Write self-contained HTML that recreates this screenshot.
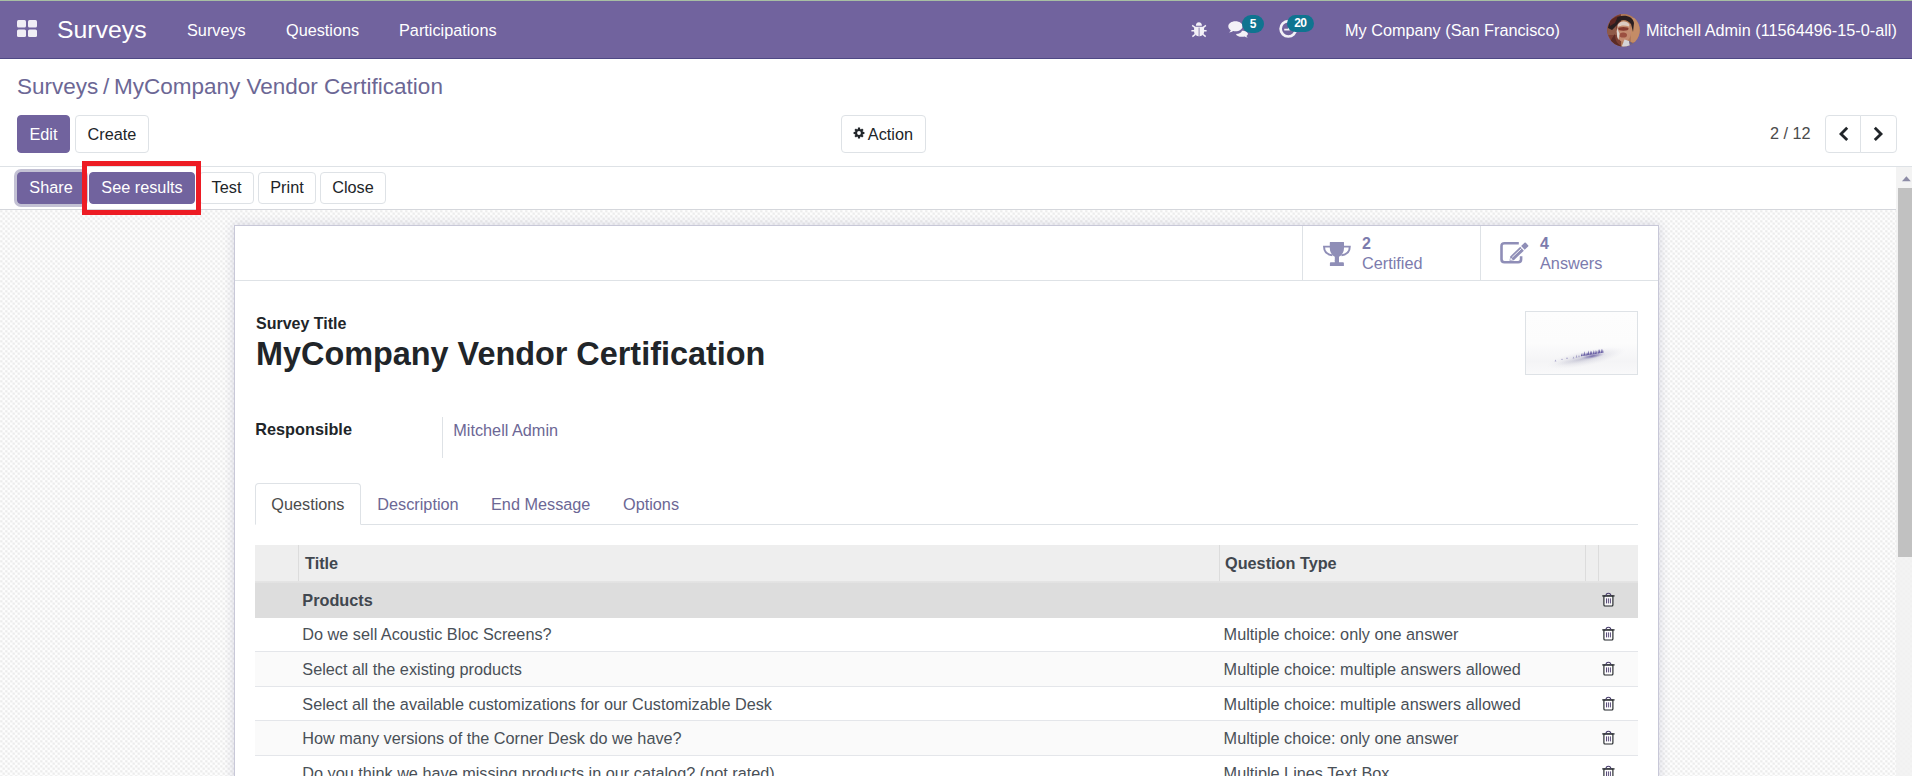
<!DOCTYPE html>
<html lang="en">
<head>
<meta charset="utf-8">
<title>Surveys - MyCompany Vendor Certification</title>
<style>
*{box-sizing:border-box;margin:0;padding:0}
html,body{width:1912px;height:776px;overflow:hidden;background:#fff}
body{font-family:"Liberation Sans",Arial,sans-serif;font-size:16.25px;color:#212529;position:relative}
.abs{position:absolute;white-space:nowrap}
/* top */
#topline{left:0;top:0;width:1912px;height:1px;background:#a7bfa3}
#nav{left:0;top:1px;width:1912px;height:58px;background:#71639e;border-bottom:1px solid #4e4885}
#nav .t{color:#fff;line-height:20px;font-size:16.25px}
#brand{left:57px;top:16px;font-size:24.8px!important;line-height:28px!important;color:#fff}
.badge{position:absolute;background:#0f7490;color:#fff;font-weight:bold;font-size:12px;line-height:18px;height:18px;border-radius:9px;text-align:center}
/* control panel */
#bc{left:17px;top:72px;font-size:22.5px;line-height:30px;color:#6c6795}
.btn{position:absolute;height:38px;line-height:36px;border:1px solid #dee2e6;border-radius:4px;background:#fff;color:#212529;text-align:center;font-size:16.25px;white-space:nowrap}
.btn.p{background:#71639e;border-color:#71639e;color:#fff}
.sb{height:32px;line-height:28px}
#cpline{left:0;top:166px;width:1912px;height:1px;background:#dee2e6}
#status{left:0;top:167px;width:1896px;height:43px;background:#fff;border-bottom:1px solid #d5d7dc}
#content{left:0;top:210px;width:1912px;height:566px;background:radial-gradient(circle at 1.25px 1.25px,#ebebeb 0,#eee .7px,rgba(240,240,240,0) 2px),radial-gradient(circle at 3.75px 3.75px,#ebebeb 0,#eee .7px,rgba(240,240,240,0) 2px),#fdfdfd;background-size:5px 5px}
#sheet{left:234px;top:225px;width:1425px;height:560px;background:#fff;border:1px solid #c8c8d8;box-shadow:0 0 10px rgba(130,130,165,.3)}
#bbox{left:235px;top:226px;width:1423px;height:55px;border-bottom:1px solid #dee2e6}
.stat{position:absolute;top:226px;height:54px;border-left:1px solid #dee2e6;color:#7c7bad}
.stat .n{position:absolute;left:59px;top:8px;font-weight:bold;font-size:16px;line-height:20px}
.stat .l{position:absolute;left:59px;top:27px;font-size:16.25px;line-height:20px}
/* scrollbar */
#sbar{left:1896px;top:167px;width:16px;height:609px;background:rgba(241,241,241,.85)}
#sthumb{left:1898px;top:188px;width:14px;height:369px;background:#c1c1c1}
/* table */
.row{position:absolute;left:255px;width:1383px;border-bottom:1px solid #e4e6ea}
.row .a{position:absolute;left:47.3px;margin-top:1px;color:#495057}
.row .b{position:absolute;left:968.6px;margin-top:1px;color:#495057}
</style>
</head>
<body>
<div class="abs" id="nav"></div>
<div class="abs" id="topline"></div>
<!-- apps icon -->
<svg class="abs" style="left:17px;top:20px" width="20" height="17" viewBox="0 0 20 17"><g fill="#f0eef5"><rect x="0" y="0" width="9" height="7.5" rx="1.5"/><rect x="11" y="0" width="9" height="7.5" rx="1.5"/><rect x="0" y="9.5" width="9" height="7.5" rx="1.5"/><rect x="11" y="9.5" width="9" height="7.5" rx="1.5"/></g></svg>
<div class="abs t" id="brand">Surveys</div>
<div id="navmenu">
<div class="abs t" style="left:187px;top:21px;color:#fff">Surveys</div>
<div class="abs t" style="left:286px;top:21px;color:#fff">Questions</div>
<div class="abs t" style="left:399px;top:21px;color:#fff">Participations</div>
<div class="abs t" style="left:1345px;top:21px;color:#fff">My Company (San Francisco)</div>
<div class="abs t" style="left:1646px;top:21px;color:#fff">Mitchell Admin (11564496-15-0-all)</div>
</div>

<!-- nav icons -->
<svg class="abs" style="left:1190px;top:21px" width="18" height="18" viewBox="0 0 18 18"><g fill="#f3f1f7"><path d="M5.9,4.8 A3,3.6 0 0 1 11.9,4.8Z"/><path d="M4.1,5.7 H14.1 V11 A5,4.3 0 0 1 4.1,11Z"/></g><g stroke="#f3f1f7" stroke-width="1.4" fill="none"><path d="M2.2,4.4 L4.8,6.4 M15.9,4.4 L13.4,6.4 M1.4,9.8 H16.6 M2.4,15.6 L5.2,13.4 M15.7,15.6 L13,13.4"/></g><path d="M9.1,6.6 V15" stroke="#71639e" stroke-width=".8"/></svg>
<svg class="abs" style="left:1228.2px;top:21.3px" width="20.2" height="16.7" viewBox="0 0 20.6 18.2" preserveAspectRatio="none"><g fill="#f3f1f7"><path d="M14.2,10.5 C17.6,10.5 20.3,12 20.3,14 C20.3,15 19.7,15.8 18.8,16.4 C19,17 19.5,17.6 20.2,17.9 C18.9,17.9 17.8,17.5 17,16.9 C16.2,17.1 15.3,17.3 14.2,17.3 C11,17.3 8.4,16 8.2,14.2 C11.5,14 14,12.6 14.2,10.5Z"/><path d="M7.6,0.3 C11.7,0.3 14.9,2.7 14.9,5.8 C14.9,8.9 11.7,11.3 7.6,11.3 C6.8,11.3 6,11.2 5.3,11 C4.2,12 2.7,12.5 1,12.6 C1.9,12 2.6,11.2 2.9,10.2 C1.3,9.2 0.3,7.6 0.3,5.8 C0.3,2.7 3.5,0.3 7.6,0.3Z"/></g></svg>
<svg class="abs" style="left:1279px;top:19px" width="20" height="20" viewBox="0 0 20 20"><circle cx="9.3" cy="9.8" r="7.7" fill="none" stroke="#f3f1f7" stroke-width="2.7"/><path d="M9.9,5 V10.6 H5.2" fill="none" stroke="#f3f1f7" stroke-width="1.7"/></svg>
<!-- avatar -->
<svg class="abs" style="left:1607px;top:13.5px" width="33" height="33" viewBox="0 0 33 33"><defs><clipPath id="av"><circle cx="16.5" cy="16.3" r="16.2"/></clipPath></defs><g clip-path="url(#av)"><rect width="33" height="33" fill="#b27a58"/><rect x="0" y="0" width="14" height="33" fill="#7c3f33"/><rect x="0" y="9" width="9" height="12" fill="#8f5a48"/><rect x="24" y="4" width="9" height="24" fill="#c48c66"/><path d="M1,14 C2,1 25,-3 27,9 L26,18 L24,10 C19,4 13,5 10,11 L5,16Z" fill="#2a1e20"/><path d="M3,6 L11,2 L8,9 L3,12Z" fill="#5e2622"/><ellipse cx="16.8" cy="17.5" rx="7.4" ry="10.5" fill="#c48b70"/><path d="M10.5,11 C13,6.5 20,6.5 22.5,10.5 L22,12.5 C18,11 14,11 10.8,13Z" fill="#dccbc3"/><ellipse cx="16.4" cy="14.8" rx="5.2" ry="1.9" fill="#85382f"/><ellipse cx="16.2" cy="21" rx="3.8" ry="2.6" fill="#9c4f40"/><path d="M10.2,14 C9.4,18 9.8,23 11.4,26 L12.6,20Z" fill="#dcd6d0"/><path d="M8,20 C8,27 11,31 16,33 L3,33 C2,28 5,24 8,20Z" fill="#5b2b26"/><path d="M14.5,33 L17.5,25.5 L22,27 L24,33Z" fill="#d5d3d6"/><path d="M22,27 L27,30 L25,33 L23,33Z" fill="#6a5f86"/></g></svg>
<div class="badge" style="left:1242px;top:14.8px;width:22px">5</div>
<div class="badge" style="left:1287px;top:14.8px;width:27px;height:17.4px;line-height:17.4px;letter-spacing:-.6px;text-indent:-.6px">20</div>

<!-- breadcrumb -->
<div class="abs" id="bc">Surveys<span style="position:absolute;left:86px;top:0">/</span><span style="position:absolute;left:97px;top:0">MyCompany Vendor Certification</span></div>
<div class="btn p" style="left:17px;top:115px;width:53px">Edit</div>
<div class="btn" style="left:75px;top:115px;width:74px">Create</div>
<div class="btn" style="left:841px;top:115px;width:85px;text-align:left"><span style="position:absolute;left:25.8px;top:0">Action</span></div>
<svg class="abs" style="left:851.8px;top:126.4px" width="14" height="14" viewBox="-7.35 -7.35 14.7 14.7"><path fill="#212529" fill-rule="evenodd" d="M4.13,-1.19 L5.68,-1.15 L5.68,1.15 L4.13,1.19 L3.76,2.08 L4.83,3.20 L3.20,4.83 L2.08,3.76 L1.19,4.13 L1.15,5.68 L-1.15,5.68 L-1.19,4.13 L-2.08,3.76 L-3.20,4.83 L-4.83,3.20 L-3.76,2.08 L-4.13,1.19 L-5.68,1.15 L-5.68,-1.15 L-4.13,-1.19 L-3.76,-2.08 L-4.83,-3.20 L-3.20,-4.83 L-2.08,-3.76 L-1.19,-4.13 L-1.15,-5.68 L1.15,-5.68 L1.19,-4.13 L2.08,-3.76 L3.20,-4.83 L4.83,-3.20 L3.76,-2.08Z M2.00,0 A2.00,2.00 0 1 0 -2.00,0 A2.00,2.00 0 1 0 2.00,0Z"/></svg>
<div class="abs" style="left:1770px;top:123px;line-height:20px;color:#4c4c4c">2 / 12</div>
<div class="btn" style="left:1825px;top:115px;width:36px;height:38px;border-radius:4px 0 0 4px"></div>
<div class="btn" style="left:1860px;top:115px;width:37px;height:38px;border-radius:0 4px 4px 0"></div>
<svg class="abs" style="left:0;top:0;pointer-events:none" width="1912" height="776"><g fill="#212529"><polygon points="1839,133.9 1846.2,126.8 1848.2,128.8 1843,133.9 1848.2,139 1846.2,141"/><polygon points="1883,133.9 1875.8,126.8 1873.8,128.8 1879,133.9 1873.8,139 1875.8,141"/></g></svg>
<div class="abs" id="cpline"></div>
<div class="abs" id="status"></div>
<div class="btn p sb" style="left:17px;top:172px;width:68px;box-shadow:0 0 0 3px #c3c1d4">Share</div>
<div class="btn p sb" style="left:89px;top:172px;width:106px">See results</div>
<div class="btn sb" style="left:199px;top:172px;width:55px">Test</div>
<div class="btn sb" style="left:258px;top:172px;width:58px">Print</div>
<div class="btn sb" style="left:320px;top:172px;width:66px">Close</div>

<div class="abs" id="content"></div>
<div class="abs" id="sheet"></div>
<div class="abs" id="bbox"></div>
<div class="stat" style="left:1302px;width:178px"><span class="n">2</span><span class="l">Certified</span></div>
<div class="stat" style="left:1480px;width:178px"><span class="n">4</span><span class="l">Answers</span></div>

<div class="abs" style="left:256px;top:314px;font-weight:bold;font-size:16px;line-height:20px">Survey Title</div>
<div class="abs" style="left:256px;top:334px;font-weight:bold;font-size:32.4px;line-height:40px">MyCompany Vendor Certification</div>
<div class="abs" style="left:1525px;top:311px;width:113px;height:64px;border:1px solid #dee2e6;background:#fcfcfd"></div>

<div class="abs" style="left:255.3px;top:419px;font-weight:bold;line-height:20px">Responsible</div>
<div class="abs" style="left:442px;top:417px;width:1px;height:41px;background:#dee2e6"></div>
<div class="abs" style="left:453.3px;top:420px;line-height:20px;color:#6c6795">Mitchell Admin</div>

<!-- tabs -->
<div class="abs" style="left:255px;top:524px;width:1383px;height:1px;background:#dee2e6"></div>
<div class="abs" style="left:255px;top:483px;width:106px;height:42px;border:1px solid #dee2e6;border-bottom-color:#fff;border-radius:4px 4px 0 0;background:#fff"></div>
<div class="abs" style="left:271.3px;top:494px;line-height:20px;color:#4c4c4c">Questions</div>
<div class="abs" style="left:377.3px;top:494px;line-height:20px;color:#6c6795">Description</div>
<div class="abs" style="left:491px;top:494px;line-height:20px;color:#6c6795">End Message</div>
<div class="abs" style="left:623px;top:494px;line-height:20px;color:#6c6795">Options</div>

<!-- table -->
<div class="abs" style="left:255px;top:545px;width:1383px;height:38px;background:linear-gradient(#eee 0,#eee 35.5px,#e5e5e5 36px,#e2e2e2 38px)"></div>
<div class="abs" style="left:305px;top:553px;font-weight:bold;line-height:20px;color:#41474f">Title</div>
<div class="abs" style="left:1225px;top:553px;font-weight:bold;line-height:20px;color:#41474f">Question Type</div>
<div class="abs" style="left:255px;top:582.6px;width:1383px;height:35px;background:#ddd"></div>
<div class="abs" style="left:302.3px;top:590px;font-weight:bold;line-height:20px;color:#41474f">Products</div>

<div class="row" style="top:618px;height:34px"><span class="a" style="top:6px">Do we sell Acoustic Bloc Screens?</span><span class="b" style="top:6px">Multiple choice: only one answer</span></div>
<div class="row" style="top:652px;height:35px;background:#fafafa"><span class="a" style="top:7px">Select all the existing products</span><span class="b" style="top:7px">Multiple choice: multiple answers allowed</span></div>
<div class="row" style="top:687px;height:34px"><span class="a" style="top:7px">Select all the available customizations for our Customizable Desk</span><span class="b" style="top:7px">Multiple choice: multiple answers allowed</span></div>
<div class="row" style="top:721px;height:35px;background:#fafafa"><span class="a" style="top:7px">How many versions of the Corner Desk do we have?</span><span class="b" style="top:7px">Multiple choice: only one answer</span></div>
<div class="row" style="top:756px;height:35px"><span class="a" style="top:7px">Do you think we have missing products in our catalog? (not rated)</span><span class="b" style="top:7px">Multiple Lines Text Box</span></div>


<!-- stat icons -->
<svg class="abs" style="left:1322px;top:241px" width="29" height="26" viewBox="0 0 29 26"><g fill="#8f8eb7"><path d="M8.2,0.9 H21.6 Q22,0.9 22,1.4 V7 C22,11.6 19.4,14.6 17,15.8 V19.8 H12.8 V15.8 C10.4,14.6 7.8,11.6 7.8,7 V1.4 Q7.8,0.9 8.2,0.9Z"/><path d="M12.8,19 H17 V21.2 H21 Q21.9,21.2 21.9,22.2 V25 H7.9 V22.2 Q7.9,21.2 8.8,21.2 H12.8Z"/></g><g fill="none" stroke="#8f8eb7" stroke-width="1.9"><path d="M8.4,5.6 H2 C2,10 5,13.6 10.4,14.4"/><path d="M21.4,5.6 H27.8 C27.8,10 24.8,13.6 19.4,14.4"/></g></svg>
<svg class="abs" style="left:1499px;top:240px" width="32" height="26" viewBox="0 0 32 26"><path d="M19.8,3.2 H5.5 Q2.5,3.2 2.5,6.2 V19.2 Q2.5,22.2 5.5,22.2 H19.1 Q22.1,22.2 22.1,19.2 V16.3" fill="none" stroke="#8f8eb7" stroke-width="2.6"/><g fill="#8f8eb7"><path d="M10.5,20.7 L11.27,16.38 L21.25,6.87 L24.83,10.63 L14.85,20.14Z"/><path d="M22.11,6.04 L25.5,2.8 Q26.16,2.18 26.8,2.85 L29.1,5.3 Q29.74,5.94 29.1,6.55 L25.69,9.8Z"/></g><path d="M13.2,17.3 L22.4,8.6" stroke="#fff" stroke-width=".9"/><path d="M11.7,17.6 L13.7,19.8 L11.2,20.1Z" fill="#fff"/></svg>
<!-- thumbnail -->
<svg class="abs" style="left:1526px;top:312px" width="111" height="62" viewBox="0 0 111 62"><defs><radialGradient id="sm"><stop offset="0" stop-color="#5a4b9c" stop-opacity=".8"/><stop offset=".5" stop-color="#8a84b6" stop-opacity=".55"/><stop offset="1" stop-color="#c9c8d8" stop-opacity="0"/></radialGradient><radialGradient id="sm2"><stop offset="0" stop-color="#bdbccf" stop-opacity=".65"/><stop offset=".6" stop-color="#d6d6e0" stop-opacity=".35"/><stop offset="1" stop-color="#e6e6ec" stop-opacity="0"/></radialGradient><linearGradient id="fog" x1="0" y1="0" x2="0" y2="1"><stop offset="0" stop-color="#fdfdfd"/><stop offset=".5" stop-color="#fcfcfc"/><stop offset=".8" stop-color="#f4f4f6"/><stop offset="1" stop-color="#f9f9fa"/></linearGradient></defs><rect width="111" height="62" fill="url(#fog)"/><g transform="rotate(-11 60 45)"><ellipse cx="60" cy="46" rx="40" ry="8" fill="url(#sm2)"/><ellipse cx="55" cy="46.5" rx="27" ry="3.6" fill="url(#sm2)"/><ellipse cx="66.5" cy="45.3" rx="13.5" ry="2.7" fill="url(#sm)"/></g><g fill="#4d4295" fill-opacity=".8"><path d="M54.8,44.2 L55.5,41.1 L56.2,44.2Z"/><path d="M56.2,44.0 L56.9,41.1 L57.6,44.0Z"/><path d="M57.3,43.7 L58.3,39.3 L59.4,43.7Z"/><path d="M59.1,43.5 L60.1,40.4 L61.0,43.5Z"/><path d="M60.6,43.3 L61.4,40.3 L62.1,43.3Z"/><path d="M61.6,43.1 L62.6,38.6 L63.7,43.1Z"/><path d="M63.6,42.8 L64.4,38.6 L65.2,42.8Z"/><path d="M64.7,42.6 L65.7,38.7 L66.7,42.6Z"/><path d="M66.8,42.3 L67.5,37.9 L68.3,42.3Z"/><path d="M68.2,42.0 L69.1,38.1 L70.0,42.0Z"/><path d="M69.6,41.8 L70.3,38.3 L71.1,41.8Z"/><path d="M71.3,41.5 L72.2,37.2 L73.1,41.5Z"/><path d="M72.6,41.3 L73.5,36.9 L74.5,41.3Z"/><path d="M74.4,41.0 L75.3,36.7 L76.2,41.0Z"/><path d="M75.9,40.8 L76.8,37.0 L77.6,40.8Z"/></g><g fill="#8d88b8" fill-opacity=".7"><path d="M49.6,45.8 L50.5,42.4 L51.4,45.8Z"/><path d="M46.6,46.6 L47.5,44.4 L48.4,46.6Z"/><path d="M40.1,47.0 L41.0,45.0 L41.9,47.0Z"/><path d="M35.1,48.0 L36.0,46.4 L36.9,48.0Z"/><path d="M28.6,49.6 L29.5,47.4 L30.4,49.6Z"/><path d="M52.1,45.2 L53.0,42.8 L53.9,45.2Z"/></g></svg>
<!-- table column separators -->
<div class="abs" style="left:298px;top:545px;width:1px;height:36px;background:#dcdcdc"></div>
<div class="abs" style="left:1219px;top:545px;width:1px;height:36px;background:#dcdcdc"></div>
<div class="abs" style="left:1585px;top:545px;width:1px;height:36px;background:#dcdcdc"></div>
<div class="abs" style="left:1598px;top:545px;width:1px;height:36px;background:#dcdcdc"></div>
<!-- trash icons -->
<svg class="abs" style="left:1602px;top:592.1px" width="14" height="15"><path d="M1.9,4 H10.9 V13 Q10.9,14 9.9,14 H2.9 Q1.9,14 1.9,13Z" fill="#fff" fill-opacity=".75" stroke="#212529" stroke-width="1.15"/><path d="M0.2,3.9 H12.6" stroke="#212529" stroke-width="1.2"/><path d="M4,3.6 C4,0.4 8.8,0.4 8.8,3.6" fill="none" stroke="#4a3f6e" stroke-width="1.1"/><path d="M4.5,6.4 V11.4 M6.4,6.4 V11.4 M8.4,6.4 V11.4" stroke="#5a4b7a" stroke-width="1"/></svg>
<svg class="abs" style="left:1602px;top:626.1px" width="14" height="15"><path d="M1.9,4 H10.9 V13 Q10.9,14 9.9,14 H2.9 Q1.9,14 1.9,13Z" fill="#fff" fill-opacity=".75" stroke="#212529" stroke-width="1.15"/><path d="M0.2,3.9 H12.6" stroke="#212529" stroke-width="1.2"/><path d="M4,3.6 C4,0.4 8.8,0.4 8.8,3.6" fill="none" stroke="#4a3f6e" stroke-width="1.1"/><path d="M4.5,6.4 V11.4 M6.4,6.4 V11.4 M8.4,6.4 V11.4" stroke="#5a4b7a" stroke-width="1"/></svg>
<svg class="abs" style="left:1602px;top:660.9px" width="14" height="15"><path d="M1.9,4 H10.9 V13 Q10.9,14 9.9,14 H2.9 Q1.9,14 1.9,13Z" fill="#fff" fill-opacity=".75" stroke="#212529" stroke-width="1.15"/><path d="M0.2,3.9 H12.6" stroke="#212529" stroke-width="1.2"/><path d="M4,3.6 C4,0.4 8.8,0.4 8.8,3.6" fill="none" stroke="#4a3f6e" stroke-width="1.1"/><path d="M4.5,6.4 V11.4 M6.4,6.4 V11.4 M8.4,6.4 V11.4" stroke="#5a4b7a" stroke-width="1"/></svg>
<svg class="abs" style="left:1602px;top:695.7px" width="14" height="15"><path d="M1.9,4 H10.9 V13 Q10.9,14 9.9,14 H2.9 Q1.9,14 1.9,13Z" fill="#fff" fill-opacity=".75" stroke="#212529" stroke-width="1.15"/><path d="M0.2,3.9 H12.6" stroke="#212529" stroke-width="1.2"/><path d="M4,3.6 C4,0.4 8.8,0.4 8.8,3.6" fill="none" stroke="#4a3f6e" stroke-width="1.1"/><path d="M4.5,6.4 V11.4 M6.4,6.4 V11.4 M8.4,6.4 V11.4" stroke="#5a4b7a" stroke-width="1"/></svg>
<svg class="abs" style="left:1602px;top:730.1px" width="14" height="15"><path d="M1.9,4 H10.9 V13 Q10.9,14 9.9,14 H2.9 Q1.9,14 1.9,13Z" fill="#fff" fill-opacity=".75" stroke="#212529" stroke-width="1.15"/><path d="M0.2,3.9 H12.6" stroke="#212529" stroke-width="1.2"/><path d="M4,3.6 C4,0.4 8.8,0.4 8.8,3.6" fill="none" stroke="#4a3f6e" stroke-width="1.1"/><path d="M4.5,6.4 V11.4 M6.4,6.4 V11.4 M8.4,6.4 V11.4" stroke="#5a4b7a" stroke-width="1"/></svg>
<svg class="abs" style="left:1602px;top:765.3px" width="14" height="15"><path d="M1.9,4 H10.9 V13 Q10.9,14 9.9,14 H2.9 Q1.9,14 1.9,13Z" fill="#fff" fill-opacity=".75" stroke="#212529" stroke-width="1.15"/><path d="M0.2,3.9 H12.6" stroke="#212529" stroke-width="1.2"/><path d="M4,3.6 C4,0.4 8.8,0.4 8.8,3.6" fill="none" stroke="#4a3f6e" stroke-width="1.1"/><path d="M4.5,6.4 V11.4 M6.4,6.4 V11.4 M8.4,6.4 V11.4" stroke="#5a4b7a" stroke-width="1"/></svg>
<!-- red highlight -->
<div class="abs" style="left:82px;top:161px;width:119px;height:54px;border:5px solid #ed1c24"></div>

<!-- scrollbar -->
<div class="abs" id="sbar"></div>
<div class="abs" id="sthumb"></div>
<svg class="abs" style="left:1896px;top:167px" width="16" height="20"><polygon points="6,14.2 14.8,14.2 10.4,9.2" fill="#8d8ca6"/></svg>
</body>
</html>
